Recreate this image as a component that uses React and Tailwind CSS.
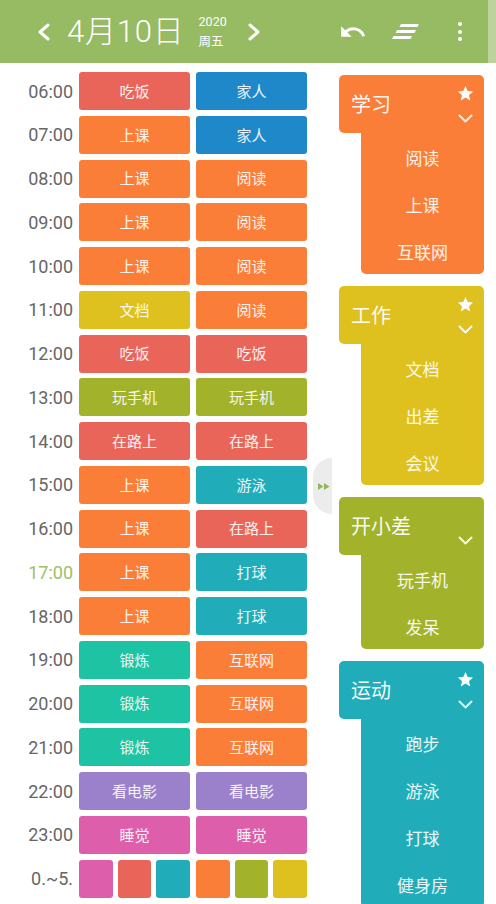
const C = {
  red: "bg-[#e9655a]",
  blue: "bg-[#1f88c9]",
  orange: "bg-[#fb7e38]",
  yellow: "bg-[#dec11f]",
  olive: "bg-[#a2b22b]",
  teal: "bg-[#20adb9]",
  green: "bg-[#1ec3a3]",
  purple: "bg-[#9b80cc]",
  pink: "bg-[#dd5fac]",
};

const rows = [
  ["06:00", ["吃饭", "red"], ["家人", "blue"]],
  ["07:00", ["上课", "orange"], ["家人", "blue"]],
  ["08:00", ["上课", "orange"], ["阅读", "orange"]],
  ["09:00", ["上课", "orange"], ["阅读", "orange"]],
  ["10:00", ["上课", "orange"], ["阅读", "orange"]],
  ["11:00", ["文档", "yellow"], ["阅读", "orange"]],
  ["12:00", ["吃饭", "red"], ["吃饭", "red"]],
  ["13:00", ["玩手机", "olive"], ["玩手机", "olive"]],
  ["14:00", ["在路上", "red"], ["在路上", "red"]],
  ["15:00", ["上课", "orange"], ["游泳", "teal"]],
  ["16:00", ["上课", "orange"], ["在路上", "red"]],
  ["17:00", ["上课", "orange"], ["打球", "teal"]],
  ["18:00", ["上课", "orange"], ["打球", "teal"]],
  ["19:00", ["锻炼", "green"], ["互联网", "orange"]],
  ["20:00", ["锻炼", "green"], ["互联网", "orange"]],
  ["21:00", ["锻炼", "green"], ["互联网", "orange"]],
  ["22:00", ["看电影", "purple"], ["看电影", "purple"]],
  ["23:00", ["睡觉", "pink"], ["睡觉", "pink"]],
];

const groups = [
  { title: "学习", color: "orange", star: true, items: ["阅读", "上课", "互联网"] },
  { title: "工作", color: "yellow", star: true, items: ["文档", "出差", "会议"] },
  { title: "开小差", color: "olive", star: false, items: ["玩手机", "发呆"] },
  { title: "运动", color: "teal", star: true, items: ["跑步", "游泳", "打球", "健身房"] },
];

const cjk = { fontFamily: '"Noto Sans CJK SC", "Noto Sans", sans-serif' };
const digits = { fontFamily: 'Roboto, "Noto Sans CJK SC", sans-serif' };

const Chevron = ({ dir }) => (
  <svg width="14" height="18" viewBox="0 0 14 18" fill="none" stroke="white" strokeWidth="3" strokeLinecap="round" strokeLinejoin="round">
    {dir === "left" ? <path d="M11 2 L3 9 L11 16" /> : <path d="M3 2 L11 9 L3 16" />}
  </svg>
);

const Star = () => (
  <svg width="17" height="17" viewBox="0 0 24 24" fill="white">
    <path d="M12 1.5l3.1 7.1 7.6.7-5.8 5 1.8 7.5L12 17.8l-6.7 4 1.8-7.5-5.8-5 7.6-.7z" />
  </svg>
);

const Down = () => (
  <svg width="15" height="9" viewBox="0 0 15 9" fill="none" stroke="white" strokeWidth="2" strokeLinecap="round" strokeLinejoin="round" opacity="0.9">
    <path d="M1.5 1.5 L7.5 7.5 L13.5 1.5" />
  </svg>
);

const Header = () => (
  <div className="flex h-[63px]">
    <div className="flex flex-1 items-center bg-[#97bb62] text-white">
      <div className="ml-[37px]">
        <Chevron dir="left" />
      </div>
      <span className="ml-[16px] text-[31px] font-light leading-none tracking-[0.8px]" style={digits}>
        4月10日
      </span>
      <div className="ml-[14px] flex flex-col items-start leading-none" style={cjk}>
        <span className="text-[12.5px]" style={digits}>2020</span>
        <span className="mt-[7px] text-[12.5px]">周五</span>
      </div>
      <div className="ml-[20px]">
        <Chevron dir="right" />
      </div>
      <svg className="ml-[80px]" width="26" height="14" viewBox="2 6 22 12" fill="white">
        <path d="M12.5 8c-2.65 0-5.05.99-6.9 2.6L2 7v9h9l-3.62-3.62c1.39-1.16 3.16-1.88 5.12-1.88 3.54 0 6.55 2.31 7.6 5.5l2.37-.78C21.08 11.03 17.15 8 12.5 8z" />
      </svg>
      <svg className="ml-[25px]" width="27" height="15" viewBox="0 0 27 15" fill="white">
        <polygon points="9,0 27,0 25.5,3 7.5,3" />
        <polygon points="5,6 24,6 22.5,9 3.5,9" />
        <polygon points="1.5,12 20,12 18.5,15 0,15" />
      </svg>
      <div className="ml-[39px] flex flex-col gap-[3.5px]">
        <span className="h-[4px] w-[4px] rounded-full bg-white" />
        <span className="h-[4px] w-[4px] rounded-full bg-white" />
        <span className="h-[4px] w-[4px] rounded-full bg-white" />
      </div>
    </div>
    <div className="w-[8px] bg-[#bcd39e]" />
  </div>
);

const Cell = ({ label, color }) => (
  <div className={`flex h-[38px] w-[111px] items-center justify-center rounded-[3px] text-[15px] text-white/90 ${C[color]}`} style={cjk}>
    {label}
  </div>
);

const TimeLabel = ({ children, highlight }) => (
  <div className={`flex h-[38px] w-[73px] items-center justify-end text-[18px] ${highlight ? "text-[#9dc06a]" : "text-[#666666]"}`} style={digits}>
    {children}
  </div>
);

const Schedule = () => (
  <div className="flex flex-col pt-[9px]">
    {rows.map(([time, a, b]) => (
      <div key={time} className="flex h-[43.75px] shrink-0 items-start gap-[6px]">
        <TimeLabel highlight={time === "17:00"}>{time}</TimeLabel>
        <Cell label={a[0]} color={a[1]} />
        <Cell label={b[0]} color={b[1]} />
      </div>
    ))}
    <div className="flex h-[43.75px] shrink-0 items-start gap-[6px]">
      <TimeLabel>0.~5.</TimeLabel>
      <div className="grid w-[111px] grid-cols-3 gap-[5px]">
        <div className={`h-[38px] rounded-[3px] ${C.pink}`} />
        <div className={`h-[38px] rounded-[3px] ${C.red}`} />
        <div className={`h-[38px] rounded-[3px] ${C.teal}`} />
      </div>
      <div className="grid w-[111px] grid-cols-3 gap-[5px]">
        <div className={`h-[38px] rounded-[3px] ${C.orange}`} />
        <div className={`h-[38px] rounded-[3px] ${C.olive}`} />
        <div className={`h-[38px] rounded-[3px] ${C.yellow}`} />
      </div>
    </div>
  </div>
);

const GroupCard = ({ group }) => (
  <div className="flex flex-col" style={cjk}>
    <div className={`flex h-[58px] items-center justify-between rounded-t-[5px] rounded-bl-[5px] pl-[12px] pr-[10px] ${C[group.color]}`}>
      <span className="text-[20px] text-white/95">{group.title}</span>
      <div className="flex flex-col items-center gap-[12px]">
        <div className={group.star ? "" : "invisible"}>
          <Star />
        </div>
        <Down />
      </div>
    </div>
    <div className={`ml-[22px] flex flex-col rounded-b-[5px] ${C[group.color]}`}>
      {group.items.map((item) => (
        <div key={item} className="flex h-[47px] items-center justify-center pt-[3px] text-[17px] text-white/90">
          {item}
        </div>
      ))}
    </div>
  </div>
);

export default function App() {
  return (
    <div className="relative h-[904px] w-[496px] overflow-hidden bg-white">
      <Header />
      <div className="flex">
        <Schedule />
        <div className="ml-[32px] flex w-[145px] flex-col gap-[12px] pt-[12px]">
          {groups.map((g) => (
            <GroupCard key={g.title} group={g} />
          ))}
        </div>
      </div>
      <div className="absolute left-[313px] top-[458px] flex h-[56px] w-[19px] items-center justify-end rounded-l-full bg-[#ececec] pr-[2px]">
        <svg width="12" height="7" viewBox="0 0 12 7" fill="#8fb85a">
          <polygon points="0,0 5.5,3.5 0,7" />
          <polygon points="6,0 11.5,3.5 6,7" />
        </svg>
      </div>
    </div>
  );
}
